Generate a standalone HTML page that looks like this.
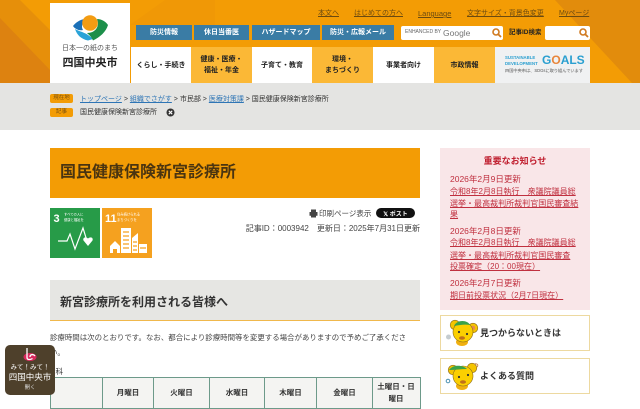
<!DOCTYPE html>
<html lang="ja"><head><meta charset="utf-8"><title>国民健康保険新宮診療所</title>
<style>
html,body{margin:0;padding:0}
body{width:640px;height:400px;overflow:hidden;position:relative;background:#fff;font-family:"Liberation Sans","Noto Sans CJK JP",sans-serif;color:#333}
.a{position:absolute;white-space:nowrap}
.c{display:flex;align-items:center;justify-content:center;text-align:center}
.b{top:25px;height:15px;background:#3a7ca5;color:#fff;font-size:7px;font-weight:bold;line-height:15px}
.n{top:47px;height:36px;font-size:7px;font-weight:bold;line-height:11px;color:#222;background:#fff}
.y{background:#fbb836}
.t{top:9px;font-size:7px;line-height:10px;color:#6b4a10;text-decoration:underline}
.bc{font-size:7px;line-height:10px;color:#333}
.bc u{color:#2e75b5}
.lb{background:#f39c05;border-radius:2px;color:#7a5010;font-size:5.5px;line-height:9px;height:9px;width:23px}
.th{top:378px;height:30px;border-right:1px solid #6d9a8a;font-size:7.5px;font-weight:bold;line-height:12px;background:#f4f4f2}
.r{left:450px;font-size:8.5px;color:#c0303f;line-height:12px}
.l{font-size:8px;letter-spacing:.02px}
.l u{color:#c0303f}
.bx{left:440px;width:148px;height:34px;border:1px solid #edd9a0;background:#fff}
</style></head><body>
<svg class="a" style="left:0;top:0" width="640" height="83" viewBox="0 0 640 83">
<rect width="640" height="83" fill="#f39c05"/>
<polygon points="0,0 20,0 50,30 50,83 0,83" fill="#e68f0a"/>
<polygon points="0,18 50,70 50,83 0,83" fill="#dd8210"/>
<polygon points="555,0 640,0 640,83 632,83" fill="#e28c0c"/>
<polygon points="130,25 165,0 215,0 215,25" fill="#f09806"/>
</svg>

<div class="a" style="left:50px;top:3px;width:80px;height:80px;background:#fff"></div>
<svg class="a" style="left:72px;top:15px" width="38" height="26" viewBox="0 0 38 26">
<path d="M1 11 C5 6 10 4 14 4 C10 8 9 12 11 15 C7 16 3 14 1 11Z" fill="#1b70b8"/>
<path d="M3 14 C8 17 14 17 21 24 L16 25.5 C9 24 5 20 3 14Z" fill="#2aa3d8"/>
<path d="M25 4 C30 4 34 7 36 10 C34 17 28 22 21 25.5 C19 21 17 20 15 18 C23 18 28 12 25 4Z" fill="#1c8f4a"/>
<circle cx="18" cy="8" r="7.8" fill="#f39c12"/>
</svg>
<div class="a c" style="left:50px;top:44px;width:80px;font-size:7px;line-height:10px;color:#555">日本一の紙のまち</div>
<div class="a c" style="left:50px;top:56px;width:80px;font-size:11px;line-height:14px;font-weight:bold;color:#222">四国中央市</div>

<div class="a t" style="left:318px">本文へ</div>
<div class="a t" style="left:354px">はじめての方へ</div>
<div class="a t" style="left:418px;font-size:7.5px">Language</div>
<div class="a t" style="left:467px">文字サイズ・背景色変更</div>
<div class="a t" style="left:559px">Myページ</div>

<div class="a c b" style="left:136px;width:56px">防災情報</div>
<div class="a c b" style="left:194px;width:55px">休日当番医</div>
<div class="a c b" style="left:252px;width:68px">ハザードマップ</div>
<div class="a c b" style="left:322px;width:72px">防災・広報メール</div>

<div class="a" style="left:401px;top:26px;width:102px;height:14px;background:#fff;border-radius:2px"></div>
<div class="a" style="left:405px;top:29px;font-size:5px;line-height:7px;color:#666">ENHANCED BY</div>
<div class="a" style="left:443px;top:28px;font-size:8.5px;line-height:10px;color:#777">Google</div>
<svg class="a" style="left:491px;top:27px" width="12" height="12" viewBox="0 0 12 12"><circle cx="5" cy="5" r="3" fill="none" stroke="#d07a20" stroke-width="1.6"/><path d="M7.2 7.2L10 10" stroke="#d07a20" stroke-width="1.8"/></svg>
<div class="a" style="left:509px;top:28px;font-size:6.5px;line-height:10px;font-weight:bold;color:#222">記事ID検索</div>
<div class="a" style="left:545px;top:26px;width:45px;height:14px;background:#fff;border-radius:2px"></div>
<svg class="a" style="left:578px;top:27px" width="12" height="12" viewBox="0 0 12 12"><circle cx="5" cy="5" r="3" fill="none" stroke="#d07a20" stroke-width="1.6"/><path d="M7.2 7.2L10 10" stroke="#d07a20" stroke-width="1.8"/></svg>

<div class="a c n" style="left:131px;width:60px">くらし・手続き</div>
<div class="a c n y" style="left:191px;width:61px">健康・医療・<br>福祉・年金</div>
<div class="a c n" style="left:252px;width:60px">子育て・教育</div>
<div class="a c n y" style="left:312px;width:61px">環境・<br>まちづくり</div>
<div class="a c n" style="left:373px;width:61px">事業者向け</div>
<div class="a c n y" style="left:434px;width:61px">市政情報</div>
<div class="a" style="left:495px;top:47px;width:95px;height:36px;background:#f0f1f2"></div>
<div class="a" style="left:505px;top:55px;font-size:4.3px;line-height:5.5px;font-weight:bold;color:#2a9fd0">SUSTAINABLE<br>DEVELOPMENT</div>
<div class="a" style="left:542px;top:53px;font-size:12px;line-height:14px;font-weight:bold;color:#2a9fd0">G<span style="color:#e8853a">O</span>ALS</div>
<div class="a" style="left:505px;top:68px;font-size:4.2px;line-height:6px;color:#555">四国中央市は、SDGsに取り組んでいます</div>

<div class="a" style="left:0;top:83px;width:640px;height:47px;background:#e4e4e2"></div>
<div class="a c lb" style="left:50px;top:94px">現在地</div>
<div class="a bc" style="left:80px;top:95px"><u>トップページ</u> &gt; <u>組織でさがす</u> &gt; 市民部 &gt; <u>医療対策課</u> &gt; 国民健康保険新宮診療所</div>
<div class="a c lb" style="left:50px;top:107.5px">記事</div>
<div class="a bc" style="left:80px;top:108px">国民健康保険新宮診療所</div>
<svg class="a" style="left:165.5px;top:107.5px" width="9" height="9" viewBox="0 0 9 9"><circle cx="4.5" cy="4.5" r="4" fill="#333"/><path d="M2.8 2.8L6.2 6.2M6.2 2.8L2.8 6.2" stroke="#fff" stroke-width="1.1"/></svg>

<div class="a" style="left:50px;top:148px;width:370px;height:50px;background:#f39c05"></div>
<div class="a" style="left:60px;top:163px;font-size:16px;line-height:20px;font-weight:bold;color:#4a3410">国民健康保険新宮診療所</div>

<svg class="a" style="left:50px;top:208px" width="50" height="50" viewBox="0 0 50 50">
<rect width="50" height="50" fill="#279b48"/>
<text x="3.5" y="14" font-size="11" font-weight="bold" fill="#fff" font-family="Liberation Sans">3</text>
<text x="14" y="7.5" font-size="3.3" fill="#fff" font-family="Noto Sans CJK JP">すべての人に</text>
<text x="14" y="13" font-size="3.3" fill="#fff" font-family="Noto Sans CJK JP">健康と福祉を</text>
<path d="M8 33H17L20 26L25 41L33 20L37 33" fill="none" stroke="#fff" stroke-width="1.2"/>
<path d="M38 38L33.5 32.5C32.5 30 35 28 38 30.5C41 28 43.5 30 42.5 32.5Z" fill="#fff"/>
</svg>
<svg class="a" style="left:102px;top:208px" width="50" height="50" viewBox="0 0 50 50">
<rect width="50" height="50" fill="#f5a11f"/>
<text x="3" y="14" font-size="11" font-weight="bold" fill="#fff" font-family="Liberation Sans">11</text>
<text x="15" y="7.5" font-size="3.3" fill="#fff" font-family="Noto Sans CJK JP">住み続けられる</text>
<text x="15" y="13" font-size="3.3" fill="#fff" font-family="Noto Sans CJK JP">まちづくりを</text>
<path d="M8 45V38L13 33L18 38V45H15V41H11V45Z" fill="#fff"/>
<rect x="19" y="20" width="10" height="25" fill="#fff"/>
<path d="M30 45V30L36 25V45Z" fill="#fff"/>
<rect x="37" y="36" width="8" height="9" fill="#fff"/>
<path d="M21 24H27M21 28H27M21 32H27M21 36H27M21 40H27M31 34H35M31 38H35M31 42H35M38 40H44" stroke="#f5a11f" stroke-width="1.2"/>
</svg>

<svg class="a" style="left:309px;top:209px" width="9" height="9" viewBox="0 0 9 9"><path d="M2 0.5H7V3H2ZM0.5 3H8.5V6.8H7V8.5H2V6.8H.5Z" fill="#444"/></svg>
<div class="a" style="left:319px;top:208px;font-size:7.5px;color:#444;line-height:11px">印刷ページ表示</div>
<div class="a c" style="left:376px;top:208px;width:39px;height:10px;border-radius:5px;background:#111;color:#fff;font-size:6px;font-weight:bold">𝕏 ポスト</div>
<div class="a" style="right:220px;top:223px;font-size:8px;line-height:12px;color:#444">記事ID：0003942　更新日：2025年7月31日更新</div>

<div class="a" style="left:50px;top:280px;width:370px;height:40px;background:#e6e6e3;border-bottom:1.5px solid #f0b84c"></div>
<div class="a" style="left:60px;top:293px;font-size:12px;line-height:18px;font-weight:bold;color:#333">新宮診療所を利用される皆様へ</div>
<div class="a" style="left:50px;top:332px;font-size:7.45px;line-height:11px;color:#444">診療時間は次のとおりです。なお、都合により診療時間等を変更する場合がありますので予めご了承くださ</div>
<div class="a" style="left:50px;top:347px;font-size:7.45px;line-height:11px;color:#444">い。</div>
<div class="a" style="left:48px;top:366px;font-size:7.5px;line-height:11px;color:#333">内科</div>

<div class="a" style="left:50px;top:377px;width:369px;height:30px;border:1px solid #6d9a8a;background:#f4f4f2"></div>
<div class="a c th" style="left:51px;width:51px"></div>
<div class="a c th" style="left:103px;width:50px">月曜日</div>
<div class="a c th" style="left:154px;width:55px">火曜日</div>
<div class="a c th" style="left:210px;width:54px">水曜日</div>
<div class="a c th" style="left:265px;width:51px">木曜日</div>
<div class="a c th" style="left:317px;width:55px">金曜日</div>
<div class="a c" style="left:373px;top:381px;width:46px;font-size:7.5px;font-weight:bold;line-height:12px;color:#333">土曜日・日<br>曜日</div>

<div class="a" style="left:440px;top:148px;width:150px;height:162px;background:#f9e6e8"></div>
<div class="a c" style="left:440px;top:155px;width:150px;font-size:9px;line-height:12px;font-weight:bold;color:#c01f2f">重要なお知らせ</div>
<div class="a r" style="top:173px">2026年2月9日更新</div>
<div class="a r l" style="top:186px"><u>令和8年2月8日執行　衆議院議員総</u></div>
<div class="a r l" style="top:198px"><u>選挙・最高裁判所裁判官国民審査結</u></div>
<div class="a r l" style="top:209px"><u>果</u></div>
<div class="a r" style="top:225px">2026年2月8日更新</div>
<div class="a r l" style="top:237px"><u>令和8年2月8日執行　衆議院議員総</u></div>
<div class="a r l" style="top:250px"><u>選挙・最高裁判所裁判官国民審査</u></div>
<div class="a r l" style="top:261px"><u>投票確定（20：00現在）</u></div>
<div class="a r" style="top:277px">2026年2月7日更新</div>
<div class="a r l" style="top:290px"><u>期日前投票状況（2月7日現在）</u></div>

<div class="a bx" style="top:315px"></div>
<div class="a bx" style="top:358px"></div>
<svg class="a" style="left:445px;top:318px" width="35" height="76" viewBox="0 0 35 76">
<circle cx="3.5" cy="19" r="2.5" fill="#c5ccd0"/>
<ellipse cx="17" cy="24" rx="6" ry="4" fill="#f0b010"/>
<circle cx="10" cy="7" r="4.8" fill="#f5c400" stroke="#8a6a20" stroke-width=".6"/>
<circle cx="28" cy="10" r="4.8" fill="#f5c400" stroke="#8a6a20" stroke-width=".6"/>
<circle cx="28" cy="10" r="2.2" fill="#e88a50"/>
<circle cx="18" cy="14" r="10" fill="#fbcf00" stroke="#8a6a20" stroke-width=".6"/>
<path d="M9 8C12 1 23 2 25 7C20 6 14 7 9 8Z" fill="#3aa24a"/>
<circle cx="14" cy="14" r="1.1" fill="#333"/><circle cx="22" cy="16" r="1.1" fill="#333"/>
<ellipse cx="17" cy="20" rx="3" ry="1.8" fill="#c0701a"/>
<g transform="translate(0,43)">
<ellipse cx="17" cy="25" rx="6" ry="4" fill="#f0b010"/>
<circle cx="8" cy="9" r="4.8" fill="#f5c400" stroke="#8a6a20" stroke-width=".6"/>
<circle cx="27" cy="7" r="4.8" fill="#f5c400" stroke="#8a6a20" stroke-width=".6"/>
<circle cx="18" cy="15" r="10" fill="#fbcf00" stroke="#8a6a20" stroke-width=".6"/>
<path d="M4 9C8 3 18 4 22 8C16 8 10 9 4 9Z" fill="#3aa24a"/>
<circle cx="14" cy="16" r="1.1" fill="#333"/><circle cx="23" cy="14" r="1.1" fill="#333"/>
<ellipse cx="18" cy="21" rx="3" ry="1.8" fill="#c0701a"/>
<circle cx="3" cy="20" r="1.8" fill="none" stroke="#4a8fb0" stroke-width="1"/>
<path d="M29 3C32 2 34 4 32 6" fill="none" stroke="#c98a50" stroke-width="1"/>
</g>
</svg>
<div class="a" style="left:480px;top:326px;font-size:9px;line-height:14px;font-weight:bold;color:#333">見つからないときは</div>
<div class="a" style="left:480px;top:369px;font-size:9px;line-height:14px;font-weight:bold;color:#333">よくある質問</div>

<div class="a" style="left:5px;top:345px;width:50px;height:50px;background:#4e402b;border-radius:5px"></div>
<svg class="a" style="left:22px;top:347px" width="16" height="15" viewBox="0 0 16 15"><ellipse cx="8" cy="10" rx="6.5" ry="4" fill="#d8285c"/><path d="M5 1V10.5C5 13 8 13 10.5 11.5M13 9C11 6.5 8 7.5 8 10" fill="none" stroke="#fff" stroke-width="1.3"/></svg>
<div class="a c" style="left:5px;top:363px;width:50px;font-size:6.5px;line-height:9px;color:#fff">みて！みて！</div>
<div class="a c" style="left:5px;top:372px;width:50px;font-size:8.5px;line-height:10px;color:#fff">四国中央市</div>
<div class="a c" style="left:5px;top:384px;width:50px;font-size:5.5px;line-height:8px;color:#ddd">開く</div>
</body></html>
